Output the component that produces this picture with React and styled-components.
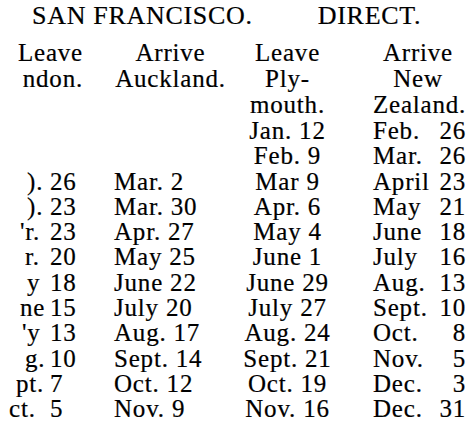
import React from 'react'
import styled, { createGlobalStyle } from 'styled-components'

const GlobalStyle = createGlobalStyle`
  html, body {
    margin: 0;
    padding: 0;
    background: #fff;
  }
  body {
    width: 469px;
    height: 428px;
    overflow: hidden;
  }
`

const Page = styled.div`
  width: 469px;
  height: 428px;
  padding-top: 1px;
  box-sizing: border-box;
  font-family: "Liberation Serif", "Times New Roman", serif;
  color: #000;
  -webkit-text-stroke: 0.2px #000;
`

const Title = styled.h1`
  display: flex;
  gap: 65px;
  margin: 0 0 9px;
  padding-left: 32px;
  font-family: inherit;
  font-size: 26px;
  font-weight: normal;
  line-height: 30px;
  letter-spacing: 0.7px;
  white-space: nowrap;
`

const Table = styled.div`
  display: grid;
  grid-template-columns: 90px 145px 105px 129px;
  font-size: 25px;
  letter-spacing: 0.8px;
  white-space: nowrap;
`

const HeadCell = styled.div`
  line-height: 26px;
  text-align: ${p => p.$align || 'center'};
  padding: 0 ${p => p.$padR || 0}px 0 ${p => p.$padL || 0}px;
`

const HeadLine = styled.span`
  display: block;
`

const LondonCell = styled.div`
  display: flex;
  line-height: 25.3px;
`

const LondonMonth = styled.span`
  flex: none;
  box-sizing: border-box;
  width: 50px;
  padding-left: ${p => p.$from || 0}px;
`

const DateCell = styled.div`
  line-height: 25.3px;
  text-align: ${p => p.$align || 'left'};
  padding-left: ${p => p.$padL || 0}px;
`

const SplitCell = styled.div`
  display: flex;
  justify-content: space-between;
  line-height: 25.3px;
  padding: 0 3px 0 33px;
`

// the left edge of the London column is torn off in the print
const rows = [
  { plymouth: 'Jan. 12', nz: ['Feb.', '26'] },
  { plymouth: 'Feb. 9', nz: ['Mar.', '26'] },
  { london: [').', '26'], from: 27, auckland: 'Mar. 2', plymouth: 'Mar 9', nz: ['April', '23'] },
  { london: [').', '23'], from: 27, auckland: 'Mar. 30', plymouth: 'Apr. 6', nz: ['May', '21'] },
  { london: ["'r.", '23'], from: 20, auckland: 'Apr. 27', plymouth: 'May 4', nz: ['June', '18'] },
  { london: ['r.', '20'], from: 25, auckland: 'May 25', plymouth: 'June 1', nz: ['July', '16'] },
  { london: ['y', '18'], from: 27, auckland: 'June 22', plymouth: 'June 29', nz: ['Aug.', '13'] },
  { london: ['ne', '15'], from: 20, auckland: 'July 20', plymouth: 'July 27', nz: ['Sept.', '10'] },
  { london: ["'y", '13'], from: 22, auckland: 'Aug. 17', plymouth: 'Aug. 24', nz: ['Oct.', '8'] },
  { london: ['g.', '10'], from: 25, auckland: 'Sept. 14', plymouth: 'Sept. 21', nz: ['Nov.', '5'] },
  { london: ['pt.', '7'], from: 16, auckland: 'Oct. 12', plymouth: 'Oct. 19', nz: ['Dec.', '3'] },
  { london: ['ct.', '5'], from: 9, auckland: 'Nov. 9', plymouth: 'Nov. 16', nz: ['Dec.', '31'] },
]

const App = () => (
  <Page>
    <GlobalStyle />
    <Title>
      <span>SAN FRANCISCO.</span>
      <span>DIRECT.</span>
    </Title>
    <Table>
      <HeadCell $align="right" $padR={7}>
        <HeadLine>Leave</HeadLine>
        <HeadLine>ndon.</HeadLine>
      </HeadCell>
      <HeadCell $padL={16}>
        <HeadLine>Arrive</HeadLine>
        <HeadLine>Auckland.</HeadLine>
      </HeadCell>
      <HeadCell>
        <HeadLine>Leave</HeadLine>
        <HeadLine>Ply-</HeadLine>
        <HeadLine>mouth.</HeadLine>
      </HeadCell>
      <HeadCell $padL={33} $padR={6}>
        <HeadLine>Arrive</HeadLine>
        <HeadLine>New</HeadLine>
        <HeadLine>Zealand.</HeadLine>
      </HeadCell>

      {rows.map((row, i) => (
        <React.Fragment key={i}>
          <LondonCell>
            {row.london && (
              <>
                <LondonMonth $from={row.from}>{row.london[0]}</LondonMonth>
                <span>{row.london[1]}</span>
              </>
            )}
          </LondonCell>
          <DateCell $padL={24}>{row.auckland}</DateCell>
          <DateCell $align="center">{row.plymouth}</DateCell>
          <SplitCell>
            <span>{row.nz[0]}</span>
            <span>{row.nz[1]}</span>
          </SplitCell>
        </React.Fragment>
      ))}
    </Table>
  </Page>
)

export default App
